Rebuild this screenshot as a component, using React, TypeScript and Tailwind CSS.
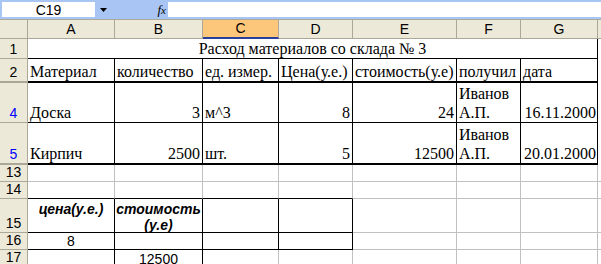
import React from "react";

const COLS = ["A", "B", "C", "D", "E", "F", "G"];
const serif = { fontFamily: '"Liberation Serif", "Times New Roman", serif' };

type CellProps = {
  children?: React.ReactNode;
  className?: string;
  span?: number;
};

function Cell({ children, className = "", span = 1 }: CellProps) {
  return (
    <div
      className={`flex overflow-hidden whitespace-nowrap bg-white text-black ${className}`}
      style={span > 1 ? { gridColumn: `span ${span}` } : undefined}
    >
      {children}
    </div>
  );
}

function RowHead({ n, blue, thick }: { n: number; blue?: boolean; thick?: boolean }) {
  return (
    <div
      className={`flex items-end justify-center bg-[#ece9d8] border-r border-[#aca899] font-['Liberation_Sans',Arial,sans-serif] text-[14px] leading-[16px] pb-[1px] ${
        thick ? "border-b-2" : "border-b"
      } ${blue ? "text-[#0000ff]" : "text-black"}`}
    >
      {n}
    </div>
  );
}

const g = "border-r border-b border-[#c0c0c0]";
const k = "border-r border-b border-black";

export default function App() {
  return (
    <div className="w-[601px] h-[264px] overflow-hidden bg-white">
      {/* formula bar */}
      <div className="flex h-[19px] bg-[#a9c5f3] pt-[2px] pb-[2px] font-['Liberation_Sans',Arial,sans-serif]">
        <div className="ml-[2px] w-[93px] bg-white flex items-center justify-center text-[14px] leading-none text-black">
          C19
        </div>
        <div className="w-[73px] flex items-center">
          <svg width="8" height="4" viewBox="0 0 8 4" className="ml-[5px]">
            <path d="M0 0h7L3.5 4z" fill="#000" />
          </svg>
          <span className="ml-auto mr-[2px] italic text-[13px] leading-none font-['Liberation_Serif',serif] text-black">
            f<span className="text-[11px]">x</span>
          </span>
        </div>
        <div className="flex-1 bg-white" />
      </div>

      <div
        className="grid border-t border-[#aca899]"
        style={{
          gridTemplateColumns: "28px 87px 88px 76px 74px 104px 64px 77px 1fr",
          gridTemplateRows: "19px 20px 24px 40px 42px 17px 17px 34px 17px 17px",
        }}
      >
        {/* column headers */}
        <div className="bg-[#ece9d8] border-r border-b border-[#aca899]" />
        {COLS.map((c) =>
          c === "C" ? (
            <div
              key={c}
              className="flex items-center justify-center bg-[#fdc77b] border-r border-[#aca899] border-b-2 border-b-[#2a3f9a] font-['Liberation_Sans',Arial,sans-serif] text-[14px] text-black"
            >
              {c}
            </div>
          ) : (
            <div
              key={c}
              className="flex items-center justify-center bg-[#ece9d8] border-r border-b border-[#aca899] font-['Liberation_Sans',Arial,sans-serif] text-[14px] text-black"
            >
              {c}
            </div>
          )
        )}
        <div className="bg-[#ece9d8] border-b border-[#aca899]" />

        {/* row 1 */}
        <RowHead n={1} />
        <Cell span={7} className={`${k} justify-center items-end text-[16px] leading-[18px]`}>
          <span style={serif}>Расход материалов со склада № 3</span>
        </Cell>
        <Cell />

        {/* row 2 */}
        <RowHead n={2} thick />
        {["Материал", "количество", "ед. измер.", "Цена(у.е.)", "стоимость(у.е)", "получил", "дата"].map(
          (t) => (
            <Cell key={t} className="border-r border-b-2 border-black items-end pl-[2px] text-[16px] leading-[19px]">
              <span style={serif}>{t}</span>
            </Cell>
          )
        )}
        <Cell />

        {/* row 4 */}
        <RowHead n={4} blue />
        <Cell className={`${k} items-end pl-[2px] text-[16px] leading-[19px]`}>
          <span style={serif}>Доска</span>
        </Cell>
        <Cell className={`${k} items-end justify-end pr-[2px] text-[16px] leading-[19px]`}>
          <span style={serif}>3</span>
        </Cell>
        <Cell className={`${k} items-end pl-[2px] text-[16px] leading-[19px]`}>
          <span style={serif}>м^3</span>
        </Cell>
        <Cell className={`${k} items-end justify-end pr-[2px] text-[16px] leading-[19px]`}>
          <span style={serif}>8</span>
        </Cell>
        <Cell className={`${k} items-end justify-end pr-[2px] text-[16px] leading-[19px]`}>
          <span style={serif}>24</span>
        </Cell>
        <Cell className={`${k} flex-col justify-end pl-[2px] text-[16px] leading-[19px]`}>
          <span style={serif}>Иванов</span>
          <span style={serif}>А.П.</span>
        </Cell>
        <Cell className={`${k} items-end justify-end pr-[1px] text-[16px] leading-[19px]`}>
          <span style={serif}>16.11.2000</span>
        </Cell>
        <Cell />

        {/* row 5 */}
        <RowHead n={5} blue thick />
        <Cell className="border-r border-b-2 border-black items-end pl-[2px] text-[16px] leading-[19px]">
          <span style={serif}>Кирпич</span>
        </Cell>
        <Cell className="border-r border-b-2 border-black items-end justify-end pr-[2px] text-[16px] leading-[19px]">
          <span style={serif}>2500</span>
        </Cell>
        <Cell className="border-r border-b-2 border-black items-end pl-[2px] text-[16px] leading-[19px]">
          <span style={serif}>шт.</span>
        </Cell>
        <Cell className="border-r border-b-2 border-black items-end justify-end pr-[2px] text-[16px] leading-[19px]">
          <span style={serif}>5</span>
        </Cell>
        <Cell className="border-r border-b-2 border-black items-end justify-end pr-[2px] text-[16px] leading-[19px]">
          <span style={serif}>12500</span>
        </Cell>
        <Cell className="border-r border-b-2 border-black flex-col justify-end pl-[2px] text-[16px] leading-[19px]">
          <span style={serif}>Иванов</span>
          <span style={serif}>А.П.</span>
        </Cell>
        <Cell className="border-r border-b-2 border-black items-end justify-end pr-[1px] text-[16px] leading-[19px]">
          <span style={serif}>20.01.2000</span>
        </Cell>
        <Cell />

        {/* row 13 */}
        <RowHead n={13} />
        {COLS.map((c) => (
          <Cell key={c} className={g} />
        ))}
        <Cell className="border-b border-[#c0c0c0]" />

        {/* row 14 */}
        <RowHead n={14} />
        {COLS.map((c, i) => (
          <Cell
            key={c}
            className={i < 4 ? "border-r border-[#c0c0c0] border-b border-b-black" : g}
          />
        ))}
        <Cell className="border-b border-[#c0c0c0]" />

        {/* row 15 */}
        <RowHead n={15} />
        <Cell className={`${k} justify-center items-start pt-[2px] font-['Liberation_Sans',Arial,sans-serif] font-bold italic text-[14px] leading-[16px]`}>
          цена(у.е.)
        </Cell>
        <Cell className={`${k} flex-col items-center pt-[2px] font-['Liberation_Sans',Arial,sans-serif] font-bold italic text-[14px] leading-[16px]`}>
          <span>стоимость</span>
          <span>(у.е)</span>
        </Cell>
        <Cell className={k} />
        <Cell className={k} />
        <Cell className={g} />
        <Cell className={g} />
        <Cell className={g} />
        <Cell className="border-b border-[#c0c0c0]" />

        {/* row 16 */}
        <RowHead n={16} />
        <Cell className={`${k} justify-center items-end font-['Liberation_Sans',Arial,sans-serif] text-[14px] leading-[16px]`}>
          8
        </Cell>
        <Cell className={k} />
        <Cell className={k} />
        <Cell className={k} />
        <Cell className={g} />
        <Cell className={g} />
        <Cell className={g} />
        <Cell className="border-b border-[#c0c0c0]" />

        {/* row 17 */}
        <RowHead n={17} />
        <Cell className="border-r border-black" />
        <Cell className="border-r border-black justify-center items-start pt-[1px] font-['Liberation_Sans',Arial,sans-serif] text-[14px] leading-[16px]">
          12500
        </Cell>
        <Cell className="border-r border-[#c0c0c0]" />
        <Cell className="border-r border-[#c0c0c0]" />
        <Cell className="border-r border-[#c0c0c0]" />
        <Cell className="border-r border-[#c0c0c0]" />
        <Cell className="border-r border-[#c0c0c0]" />
        <Cell />
      </div>
    </div>
  );
}
